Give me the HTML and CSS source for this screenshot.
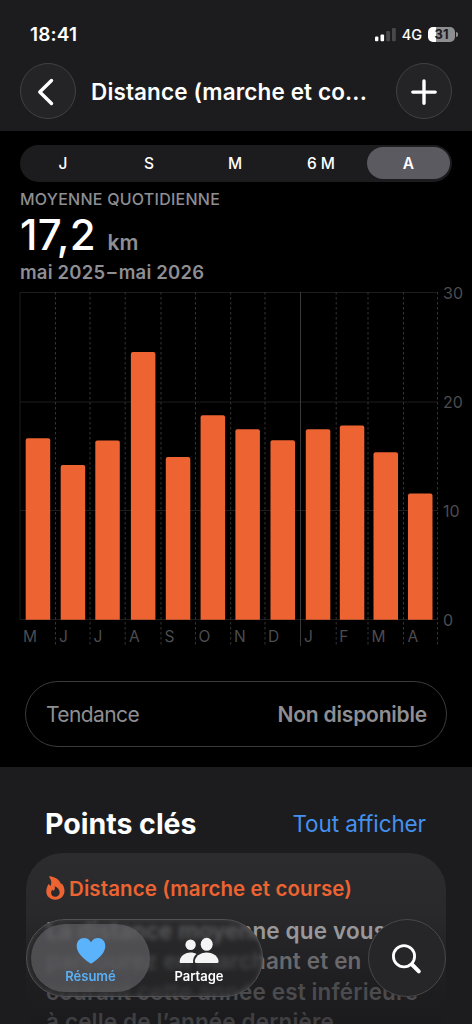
FILE: index.html
```html
<!DOCTYPE html>
<html lang="fr">

<head>
    <meta charset="UTF-8">
    <meta name="viewport" content="width=device-width, initial-scale=1.0">
    <title>Distance (marche et course)</title>
    <link rel="stylesheet" href="styles.css">
</head>

<body>
<div class="phone">

  <header class="header">
    <div class="status">
      <span class="time">18:41</span>
      <div class="status-right">
        <svg class="signal" width="21" height="14" viewBox="0 0 21 14">
          <rect x="0" y="8.5" width="3.4" height="4.7" rx="1" fill="#fff"/>
          <rect x="5.5" y="6.5" width="3.6" height="6.7" rx="1" fill="#fff"/>
          <rect x="11.2" y="3" width="3.8" height="10.2" rx="1" fill="#48484a"/>
          <rect x="17" y="0" width="3.8" height="13.2" rx="1" fill="#48484a"/>
        </svg>
        <span class="network">4G</span>
        <span class="battery">31</span>
        <span class="battery-tip"></span>
      </div>
    </div>
    <nav class="nav">
      <button type="button" class="round-button" aria-label="Retour">
        <svg width="55" height="55" viewBox="0 0 55 55"><path d="M31.5 16.5 L19.8 28 L31.5 39.5"/></svg>
      </button>
      <h1 class="title">Distance (marche et co...</h1>
      <button type="button" class="round-button" aria-label="Ajouter">
        <svg width="55" height="55" viewBox="0 0 55 55"><path d="M28 16.9 V39.3 M16.8 28.1 H39.2"/></svg>
      </button>
    </nav>
  </header>

  <main class="chart-section">
    <div class="segments">
      <span class="segment">J</span>
      <span class="segment">S</span>
      <span class="segment">M</span>
      <span class="segment">6 M</span>
      <span class="segment is-active">A</span>
    </div>

    <div class="summary">
      <div class="caption">MOYENNE QUOTIDIENNE</div>
      <div class="value">17,2 <span class="unit">km</span></div>
      <div class="period">mai 2025<span class="dash">–</span>mai 2026</div>
    </div>

    <svg class="chart" width="472" height="375" viewBox="0 280 472 375">
      <!-- horizontal grid -->
      <path class="grid" d="M20 292.5 H438 M20 402 H438 M20 510.5 H438 M20 619.5 H438 M20 292 V620"/>
      <!-- months -->
      <path class="month" d="M55.5 292 V646 M90 292 V646 M125.2 292 V646 M161 292 V646 M195.5 292 V646 M230.7 292 V646 M265 292 V646 M336.2 292 V646 M368 292 V646 M403.5 292 V646 M437.5 292 V646"/>
      <path class="year" d="M300.5 292 V646"/>
      <g class="bars">
        <path d="M25.7 619.7 V440.3 q0 -2 2 -2 h20.5 q2 0 2 2 V619.7 z"/>
        <path d="M60.7 619.7 V467 q0 -2 2 -2 h20.5 q2 0 2 2 V619.7 z"/>
        <path d="M95.3 619.7 V442.6 q0 -2 2 -2 h20.5 q2 0 2 2 V619.7 z"/>
        <path d="M130.9 619.7 V354.1 q0 -2 2 -2 h20.5 q2 0 2 2 V619.7 z"/>
        <path d="M165.8 619.7 V459 q0 -2 2 -2 h20.5 q2 0 2 2 V619.7 z"/>
        <path d="M200.6 619.7 V417.3 q0 -2 2 -2 h20.5 q2 0 2 2 V619.7 z"/>
        <path d="M235.4 619.7 V431.2 q0 -2 2 -2 h20.5 q2 0 2 2 V619.7 z"/>
        <path d="M270.5 619.7 V442.2 q0 -2 2 -2 h20.5 q2 0 2 2 V619.7 z"/>
        <path d="M305.8 619.7 V431.2 q0 -2 2 -2 h20.5 q2 0 2 2 V619.7 z"/>
        <path d="M339.8 619.7 V427.5 q0 -2 2 -2 h20.5 q2 0 2 2 V619.7 z"/>
        <path d="M373.5 619.7 V454.3 q0 -2 2 -2 h20.5 q2 0 2 2 V619.7 z"/>
        <path d="M408 619.7 V495.6 q0 -2 2 -2 h20.5 q2 0 2 2 V619.7 z"/>
      </g>
      <g class="labels">
        <text x="23" y="641.7">M</text>
        <text x="59" y="641.7">J</text>
        <text x="93.5" y="641.7">J</text>
        <text x="128.9" y="641.7">A</text>
        <text x="164.4" y="641.7">S</text>
        <text x="198.5" y="641.7">O</text>
        <text x="234" y="641.7">N</text>
        <text x="268" y="641.7">D</text>
        <text x="304" y="641.7">J</text>
        <text x="339.3" y="641.7">F</text>
        <text x="371.5" y="641.7">M</text>
        <text x="407.5" y="641.7">A</text>
      </g>
      <g class="labels scale">
        <text x="443" y="298.6">30</text>
        <text x="443" y="407.9">20</text>
        <text x="443" y="516.8">10</text>
        <text x="443" y="625.5">0</text>
      </g>
    </svg>

    <div class="trend">
      <span class="trend-name">Tendance</span>
      <span class="trend-value">Non disponible</span>
    </div>
  </main>

  <section class="highlights">
    <div class="highlights-head">
      <h2>Points clés</h2>
      <a class="show-all">Tout afficher</a>
    </div>
    <article class="card">
      <div class="card-title">
        <svg class="flame" width="19" height="25" viewBox="0 0 19 25">
          <path fill-rule="evenodd" d="M3.2 1.1 C2.900 .4 3.500 0 4.200 .200 C10.200 1.300 14.300 4.600 15.100 8.600 C15.400 8.200 15.500 7.600 15.400 6.900 C17.500 9 18.500 12 18.500 14.800 C18.500 20 14.600 23.700 9.300 23.700 C4 23.700 .300 20.200 .300 15.500 C.300 12.400 1.500 10.200 2.200 8.600 C2.400 8.100 3 8.100 3.300 8.600 C3.600 9.200 4.100 9.700 4.700 10 C5.900 6.800 5.300 4 3.200 1.100 Z M8.600 10.300 C9.300 12.800 8.700 13.800 7.600 14.800 L6.300 13.800 C5.500 14.700 5.100 15.800 5.100 16.900 C5.100 19.200 6.900 20.700 9.200 20.700 C11.800 20.700 13.700 19 13.700 16.500 C13.700 13.600 11.700 11.400 8.600 10.300 Z"/>
        </svg>
        <span>Distance (marche et course)</span>
      </div>
      <p class="card-text">
        <span class="line-1">La distance moyenne que vous</span>
        <span class="line-2">parcourez en marchant et en</span>
        <span class="line-3">courant cette année est inférieure</span>
        <span class="line-4">à celle de l’année dernière.</span>
      </p>
    </article>
  </section>

  <!-- floating bar over the page -->
  <footer class="bottom-bar">
    <div class="tabs">
      <div class="tab is-selected">
        <svg width="30" height="27" viewBox="0 0 30 27"><path d="M15 26.500 C14.400 26.500 13.700 26 13 25.500 C5.500 20.200 .700 15 .700 9 C.700 4.200 3.900 1 8 1 C11 1 13.500 2.500 15 5.200 C16.500 2.500 19 1 22 1 C26.100 1 29.300 4.200 29.300 9 C29.300 15 24.500 20.200 17 25.500 C16.300 26 15.600 26.500 15 26.500 Z"/></svg>
        <span>Résumé</span>
      </div>
      <div class="tab">
        <svg width="40" height="27" viewBox="0 0 40 27">
          <circle cx="11.600" cy="7.700" r="5.200"/>
          <path d="M1.300 26 C.800 26 .700 25.500 .700 24.800 C.700 19.700 5.200 15.400 11.600 15.400 C13.900 15.400 15.900 15.900 17.400 16.900 C14.900 18.900 13.800 21.700 14.100 26 Z"/>
          <ellipse cx="27.700" cy="7.300" rx="6" ry="6.500"/>
          <path d="M17 26 C16.200 26 15.800 25.400 15.800 24.600 C15.800 19.900 20.800 15.400 27.700 15.400 C34.600 15.400 39.600 19.900 39.600 24.600 C39.600 25.400 39.200 26 38.400 26 Z"/>
        </svg>
        <span>Partage</span>
      </div>
    </div>
    <button type="button" class="search" aria-label="Rechercher">
      <svg width="77" height="77" viewBox="0 0 77 77">
        <circle cx="36" cy="36.300" r="10.600"/>
        <path d="M44 44.500 L50.800 51.300"/>
      </svg>
    </button>
  </footer>

</div>
</body>

</html>
```
FILE: styles.css
```css
* {
  box-sizing: border-box;
}

body {
  margin: 0;
  background: #000;
  color: #fff;
  font-family: Inter, "Liberation Sans", sans-serif;
}

h1, h2, p {
  margin: 0;
}

.phone {
  position: relative;
  width: 472px;
  height: 1024px;
  overflow: hidden;
}

/* status bar and title */
.header {
  height: 131px;
  background: #1c1c1e;
}

.status {
  display: flex;
  justify-content: space-between;
  align-items: center;
  height: 63px;
  padding: 6px 14px 0 30px;
}

.time {
  font-size: 19px;
  font-weight: 600;
  letter-spacing: 0.2px;
}

.status-right {
  display: flex;
  align-items: center;
}

.network {
  margin-left: 6px;
  font-size: 14.5px;
  font-weight: 500;
}

.battery {
  width: 27px;
  height: 15px;
  margin-left: 6px;
  border-radius: 5px;
  background: linear-gradient(90deg, #fff 31%, #8e8e90 31%);
  color: #1c1c1e;
  font-size: 13px;
  font-weight: 700;
  line-height: 15px;
  text-align: center;
}

.battery-tip {
  width: 2px;
  height: 5px;
  margin-left: 1px;
  border-radius: 0 2px 2px 0;
  background: #8e8e90;
}

.nav {
  display: flex;
  align-items: center;
  height: 56px;
  padding: 0 20px;
}

.round-button {
  flex: none;
  width: 56px;
  height: 56px;
  padding: 0;
  border: 1px solid #414144;
  border-radius: 50%;
  background: #242426;
}

.round-button svg {
  display: block;
  margin: -1px;
}

.round-button path {
  fill: none;
  stroke: #fff;
  stroke-width: 3.4;
  stroke-linecap: round;
  stroke-linejoin: round;
}

.title {
  flex: 1;
  padding-left: 15px;
  font-size: 22.5px;
  font-weight: 600;
  letter-spacing: 0.13px;
  white-space: nowrap;
}

/* period picker */
.chart-section {
  height: 636px;
  padding-top: 14px;
}

.segments {
  display: flex;
  height: 37px;
  margin: 0 20px;
  padding: 2px 2px 3px 0;
  border-radius: 19px;
  background: #1c1c1f;
}

.segment {
  width: 86px;
  border-radius: 17px;
  font-size: 15.5px;
  font-weight: 500;
  line-height: 33px;
  text-align: center;
}

.is-active {
  width: 83px;
  margin-left: auto;
  background: #5b5a60;
  font-weight: 600;
}

.summary {
  height: 98px;
  padding: 6px 0 0 20px;
  color: #8e8e93;
  font-weight: 600;
  white-space: nowrap;
}

.caption {
  font-size: 16px;
  font-weight: 500;
  line-height: 22px;
  letter-spacing: 0.25px;
}

.value {
  height: 50px;
  color: #fff;
  font-size: 42px;
  font-weight: 500;
  line-height: 50px;
  letter-spacing: 0.3px;
}

.unit {
  color: #8e8e93;
  font-size: 21px;
  font-weight: 600;
  line-height: 1;
  letter-spacing: 0;
}

.period {
  font-size: 18.5px;
  line-height: 24px;
  letter-spacing: 0.2px;
}

.dash {
  margin: 0 2px;
}

/* bar chart */
.chart {
  display: block;
}

.grid, .month, .year {
  fill: none;
  stroke: #1c1c1d;
}

.month {
  stroke: #343436;
  stroke-dasharray: 2.5 2.5;
}

.year {
  stroke: #39393b;
}

.bars {
  fill: #ed6432;
}

.labels {
  fill: #4c4c4f;
  font-size: 15.5px;
}

.scale {
  font-size: 16px;
}

.trend {
  display: flex;
  justify-content: space-between;
  align-items: center;
  height: 66px;
  margin: 26px 25px 0;
  padding: 0 19px 0 20px;
  border: 1px solid #3b3b3d;
  border-radius: 33px;
  color: #8e8e93;
  font-size: 21px;
}

.trend-name {
  letter-spacing: -0.6px;
}

.trend-value {
  font-weight: 600;
  letter-spacing: -0.2px;
}

/* highlights */
.highlights {
  height: 257px;
  background: #1c1c1e;
}

.highlights-head {
  display: flex;
  justify-content: space-between;
  align-items: center;
  height: 86px;
  padding: 27px 46px 0 45px;
}

.highlights-head h2 {
  font-size: 28.5px;
  font-weight: 700;
  white-space: nowrap;
}

.show-all {
  color: #4590ee;
  font-size: 22.5px;
  letter-spacing: -0.1px;
  white-space: nowrap;
}

.card {
  height: 190px;
  margin: 0 26px;
  padding: 23px 0 0 20px;
  border-radius: 37px;
  background: linear-gradient(#2c2c2e 0, #29292b 60px, #1e1e20 130px, #1b1b1d 170px);
}

.card-title {
  display: flex;
  align-items: center;
  height: 25px;
  color: #ed6432;
  font-size: 20.5px;
  font-weight: 600;
  letter-spacing: 0.1px;
  white-space: nowrap;
}

.flame {
  margin-right: 4px;
  fill: #ed6432;
}

.card-text {
  margin-top: 15px;
  font-size: 22.5px;
  font-weight: 600;
  line-height: 30.3px;
  letter-spacing: 0.15px;
  white-space: nowrap;
}

.card-text span {
  display: block;
}

.line-1 { color: #98989b; }
.line-2 { color: #69696c; }
.line-3 { color: #4b4b4e; }
.line-4 { color: #3f3f42; }

/* floating tab bar */
.bottom-bar {
  position: absolute;
  left: 26px;
  right: 26px;
  top: 919px;
  display: flex;
  justify-content: space-between;
}

.tabs {
  display: flex;
  width: 237px;
  height: 78px;
  padding: 4px;
  border: 1px solid #525255;
  border-radius: 39px;
  background: rgba(42, 42, 44, 0.55);
  backdrop-filter: blur(2.5px);
  box-shadow: inset 0 0 5px rgba(255, 255, 255, 0.12);
}

.tab {
  display: flex;
  flex-direction: column;
  align-items: center;
  width: 108px;
  padding: 13px 10px 0 0;
  font-size: 13px;
  font-weight: 600;
  line-height: 16px;
}

.tab svg {
  margin-bottom: 4px;
  fill: #f4f4f5;
}

.is-selected {
  width: 119px;
  padding-right: 0;
  border-radius: 34px;
  background: rgba(100, 100, 104, 0.65);
  color: #5ab0f5;
}

.is-selected svg {
  fill: #5ab3fb;
}

.search {
  width: 78px;
  height: 78px;
  padding: 0;
  border: 1px solid #48484b;
  border-radius: 50%;
  background: #262628;
}

.search svg {
  display: block;
  margin: -1px;
  fill: none;
  stroke: #fff;
  stroke-width: 2.8;
  stroke-linecap: round;
}

.search path {
  stroke-width: 4;
}
```
